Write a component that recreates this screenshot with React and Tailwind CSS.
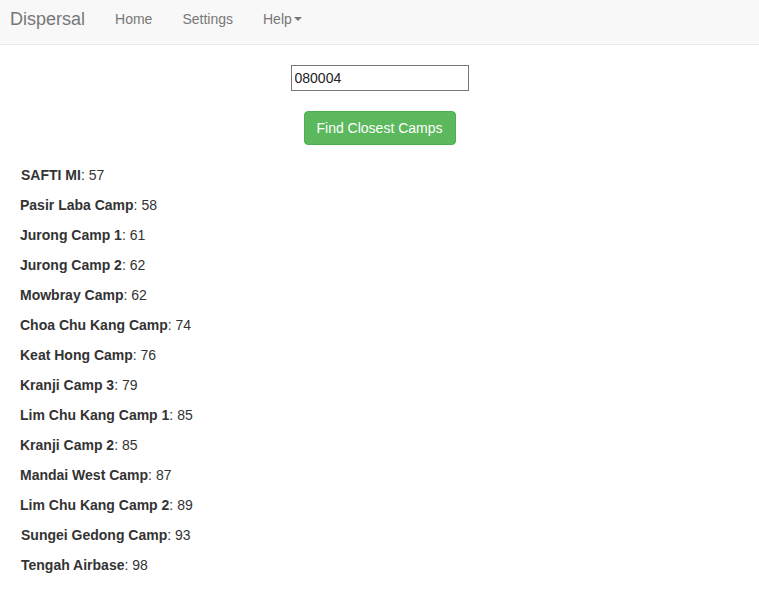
import React from "react";

const camps = [
  ["SAFTI MI", 57, true],
  ["Pasir Laba Camp", 58],
  ["Jurong Camp 1", 61],
  ["Jurong Camp 2", 62],
  ["Mowbray Camp", 62],
  ["Choa Chu Kang Camp", 74],
  ["Keat Hong Camp", 76],
  ["Kranji Camp 3", 79],
  ["Lim Chu Kang Camp 1", 85],
  ["Kranji Camp 2", 85],
  ["Mandai West Camp", 87],
  ["Lim Chu Kang Camp 2", 89],
  ["Sungei Gedong Camp", 93, true],
  ["Tengah Airbase", 98, true],
];

export default function App() {
  return (
    <div className="min-h-screen bg-white text-[14px] text-[#333]" style={{ fontFamily: '"Liberation Sans", Arial, sans-serif' }}>
      <nav className="flex h-[45px] items-center border-b border-[#e7e7e7] bg-[#f8f8f8] pb-[6px]">
        <span className="ml-[10px] text-[18px] text-[#777]">Dispersal</span>
        <span className="ml-[30px] text-[#777]">Home</span>
        <span className="ml-[30px] text-[#777]">Settings</span>
        <span className="ml-[30px] flex items-center text-[#777]">
          Help
          <span className="ml-[2px] inline-block h-0 w-0 border-x-[4px] border-t-[4px] border-x-transparent border-t-[#777]" />
        </span>
      </nav>
      <div className="flex flex-col items-center pt-[20px]">
        <input
          defaultValue="080004"
          className="h-[26px] w-[178px] border border-[#767676] px-[3px] text-[14px] text-[#222] outline-none"
          style={{ fontFamily: '"Liberation Sans", Arial, sans-serif' }}
        />
        <button className="mt-[20px] h-[34px] w-[152px] rounded-[4px] border border-[#4cae4c] bg-[#5cb85c] text-[14px] text-white">
          Find Closest Camps
        </button>
      </div>
      <div className="mt-[15px] px-[20px]">
        {camps.map(([name, d, indent]) => (
          <div key={name} className={`h-[30px] leading-[30px] ${indent ? "pl-[1px]" : ""}`}>
            <b>{name}</b>: {d}
          </div>
        ))}
      </div>
    </div>
  );
}
